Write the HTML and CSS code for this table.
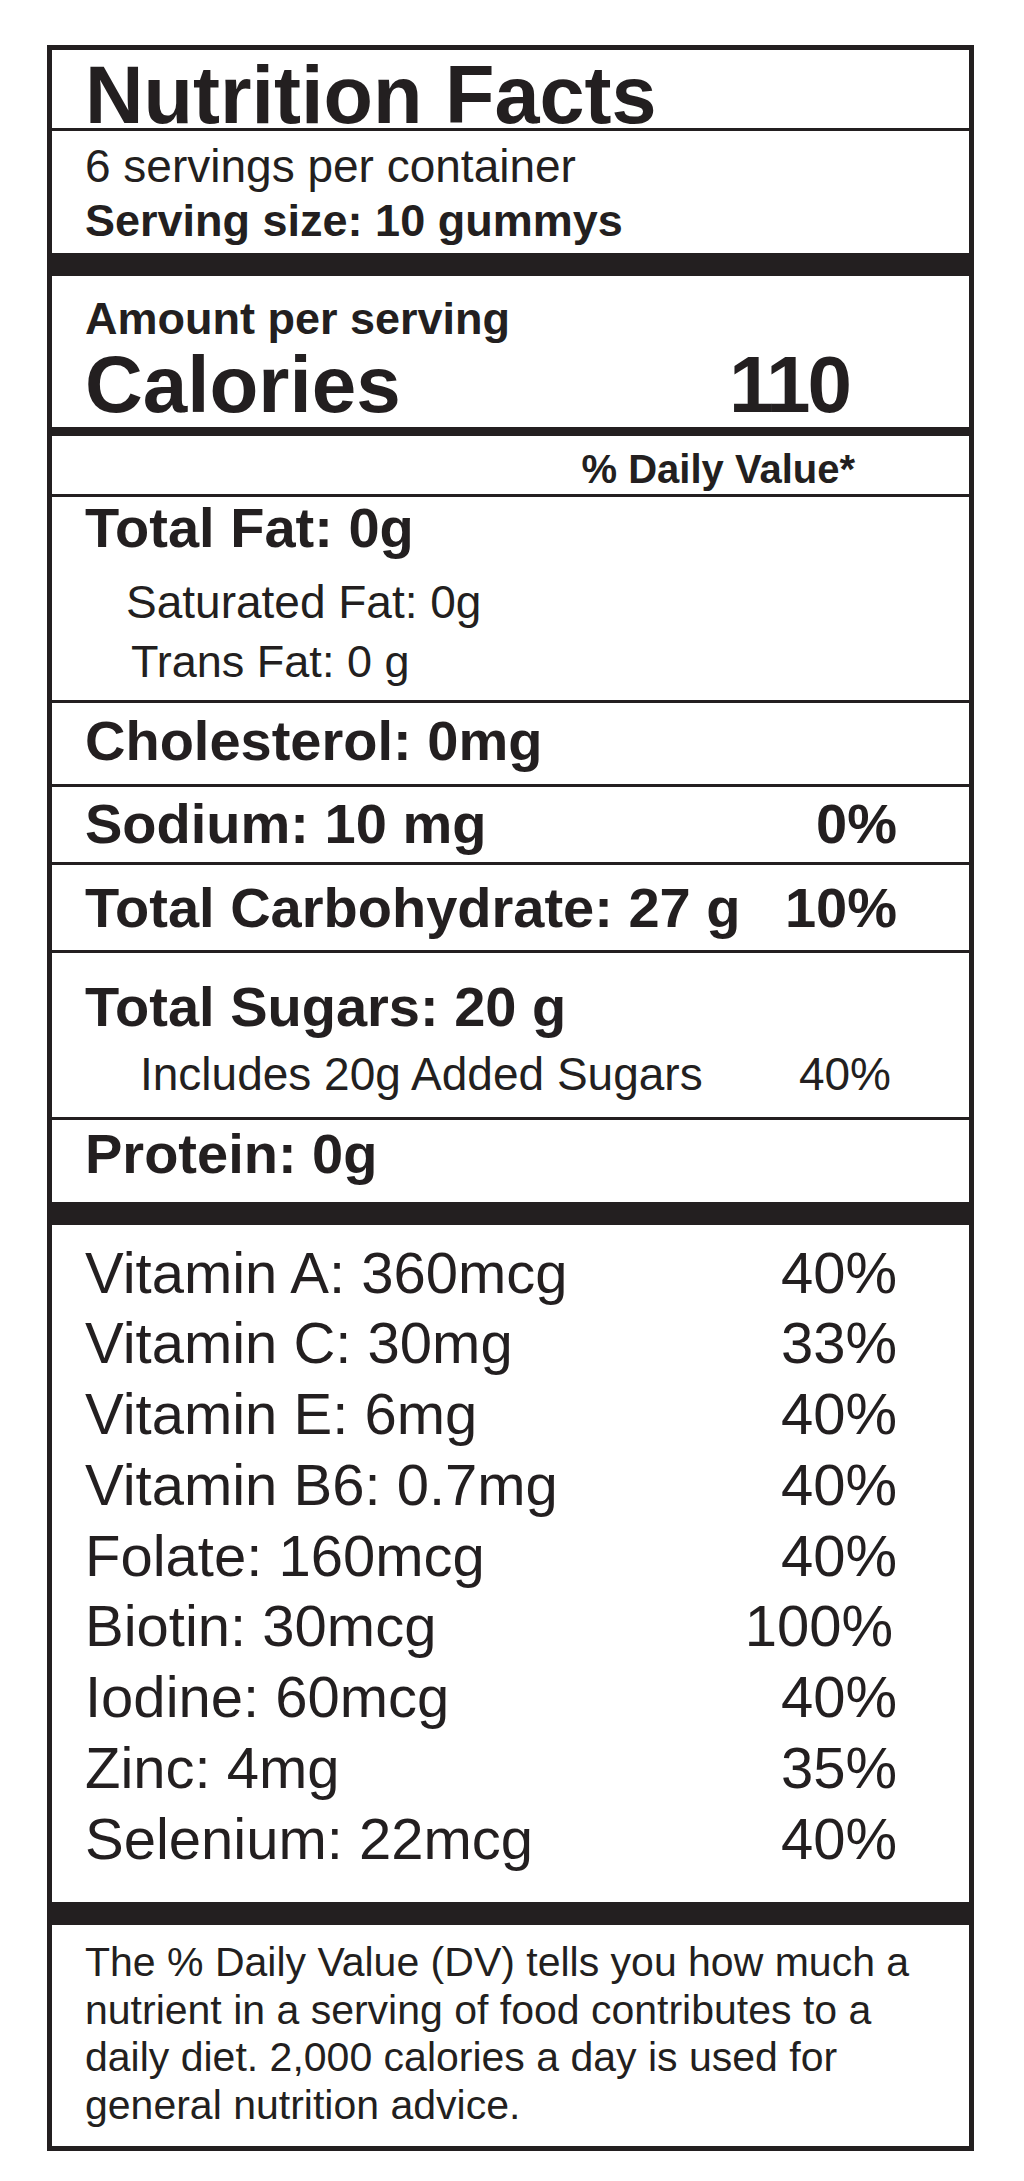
FILE: index.html
```html
<!DOCTYPE html>
<html lang="en">
<head>
<meta charset="utf-8">
<title>Nutrition Facts</title>
<link rel="stylesheet" href="styles.css">
</head>
<body>
<div class="label">
  <div class="sec sec-title">
    <h1 class="title">Nutrition Facts</h1>
  </div>
  <div class="sec sec-serv bar">
    <p class="serv-count">6 servings per container</p>
    <p class="serv-size">Serving size: 10 gummys</p>
  </div>
  <div class="sec sec-cal">
    <p class="amount">Amount per serving</p>
    <div class="cal-row"><span>Calories</span><span class="cal-num">110</span></div>
  </div>
  <div class="sec sec-dv">
    <p>% Daily Value*</p>
  </div>
  <div class="sec sec-fat">
    <p class="main">Total Fat: 0g</p>
    <div class="subs">
      <p class="sub">Saturated Fat: 0g</p>
      <p class="sub sub-trans">Trans Fat: 0 g</p>
    </div>
  </div>
  <div class="sec sec-chol">
    <p class="main">Cholesterol: 0mg</p>
  </div>
  <div class="sec sec-sod">
    <div class="main row"><span>Sodium: 10 mg</span><span>0%</span></div>
  </div>
  <div class="sec sec-carb">
    <div class="main row"><span>Total Carbohydrate: 27 g</span><span>10%</span></div>
  </div>
  <div class="sec sec-sug">
    <p class="main">Total Sugars: 20 g</p>
    <div class="row added"><span>Includes 20g Added Sugars</span><span class="added-pct">40%</span></div>
  </div>
  <div class="sec sec-pro bar">
    <p class="main">Protein: 0g</p>
  </div>
  <div class="sec sec-vit bar">
    <div class="row vit"><span>Vitamin A: 360mcg</span><span>40%</span></div>
    <div class="row vit"><span>Vitamin C: 30mg</span><span>33%</span></div>
    <div class="row vit"><span>Vitamin E: 6mg</span><span>40%</span></div>
    <div class="row vit"><span>Vitamin B6: 0.7mg</span><span>40%</span></div>
    <div class="row vit"><span>Folate: 160mcg</span><span>40%</span></div>
    <div class="row vit"><span>Biotin: 30mcg</span><span class="pct-wide">100%</span></div>
    <div class="row vit"><span>Iodine: 60mcg</span><span>40%</span></div>
    <div class="row vit"><span>Zinc: 4mg</span><span>35%</span></div>
    <div class="row vit"><span>Selenium: 22mcg</span><span>40%</span></div>
  </div>
  <div class="sec sec-foot">
    <p class="foot">The % Daily Value (DV) tells you how much a<br>nutrient in a serving of food contributes to a<br>daily diet. 2,000 calories a day is used for<br>general nutrition advice.</p>
  </div>
</div>
</body>
</html>
```

FILE: styles.css
```css
html, body {
  margin: 0;
  padding: 0;
  background: #ffffff;
}

body {
  font-family: "Liberation Sans", Arial, sans-serif;
  color: #231f20;
}

p, h1 {
  margin: 0;
}

.label {
  box-sizing: border-box;
  width: 927px;
  margin: 45px 0 0 47px;
  border: 5px solid #231f20;
}

.sec {
  padding-left: 33px;
  padding-right: 72px;
  border-bottom: 3px solid #231f20;
}

.sec.bar {
  border-bottom-width: 23px;
}

.row {
  display: flex;
  justify-content: space-between;
}

/* title */
.sec-title {
  padding-top: 12px;
}

.title {
  font-size: 81px;
  line-height: 66px;
  font-weight: 700;
}

/* servings */
.sec-serv {
  padding-top: 11px;
  padding-bottom: 1px;
}

.serv-count {
  font-size: 46px;
  line-height: 48px;
  font-weight: 400;
}

.serv-size {
  font-size: 45px;
  line-height: 62px;
  font-weight: 700;
}

/* calories */
.sec-cal {
  padding-top: 18px;
  padding-bottom: 1px;
  padding-right: 120px;
  border-bottom-width: 9px;
}

.amount {
  font-size: 45px;
  line-height: 50px;
  font-weight: 700;
}

.cal-row {
  display: flex;
  justify-content: space-between;
  font-size: 80px;
  line-height: 82px;
  font-weight: 700;
}

.cal-num {
  letter-spacing: -3px;
}

/* daily value header */
.sec-dv {
  padding-top: 8px;
  padding-right: 114px;
  font-size: 40px;
  line-height: 50px;
  font-weight: 700;
  text-align: right;
}

/* nutrient rows */
.main {
  font-size: 56px;
  font-weight: 700;
}

.sec-fat {
  padding-top: 1px;
  padding-bottom: 9px;
}

.sec-fat .main {
  line-height: 60px;
}

.subs {
  margin-top: 15px;
}

.sub {
  font-size: 46px;
  line-height: 59px;
  font-weight: 400;
  padding-left: 41px;
}

.sub.sub-trans {
  padding-left: 46px;
  font-size: 45px;
}

.sec-chol {
  padding-bottom: 6px;
}

.sec-chol .main {
  line-height: 75px;
}

.sec-sod {
  padding-bottom: 2px;
}

.sec-sod .main {
  line-height: 73px;
}

.sec-carb .main {
  line-height: 85px;
}

.sec-sug {
  padding-top: 19px;
  padding-bottom: 11px;
}

.sec-sug .main {
  line-height: 70px;
}

.added {
  font-size: 46px;
  line-height: 64px;
  font-weight: 400;
  padding-left: 55px;
}

.added-pct {
  margin-right: 6px;
}

.sec-pro {
  padding-bottom: 14px;
}

.sec-pro .main {
  line-height: 68px;
}

/* vitamins */
.sec-vit {
  padding-top: 12.5px;
  padding-bottom: 27.75px;
}

.vit {
  font-size: 58px;
  line-height: 70.75px;
  font-weight: 400;
}

.pct-wide {
  margin-right: 4px;
}

/* footnote */
.sec-foot {
  padding-top: 14px;
  padding-bottom: 16px;
  padding-right: 0;
  border-bottom: 0;
}

.foot {
  font-size: 41px;
  line-height: 47.7px;
  font-weight: 400;
  white-space: nowrap;
}
```
